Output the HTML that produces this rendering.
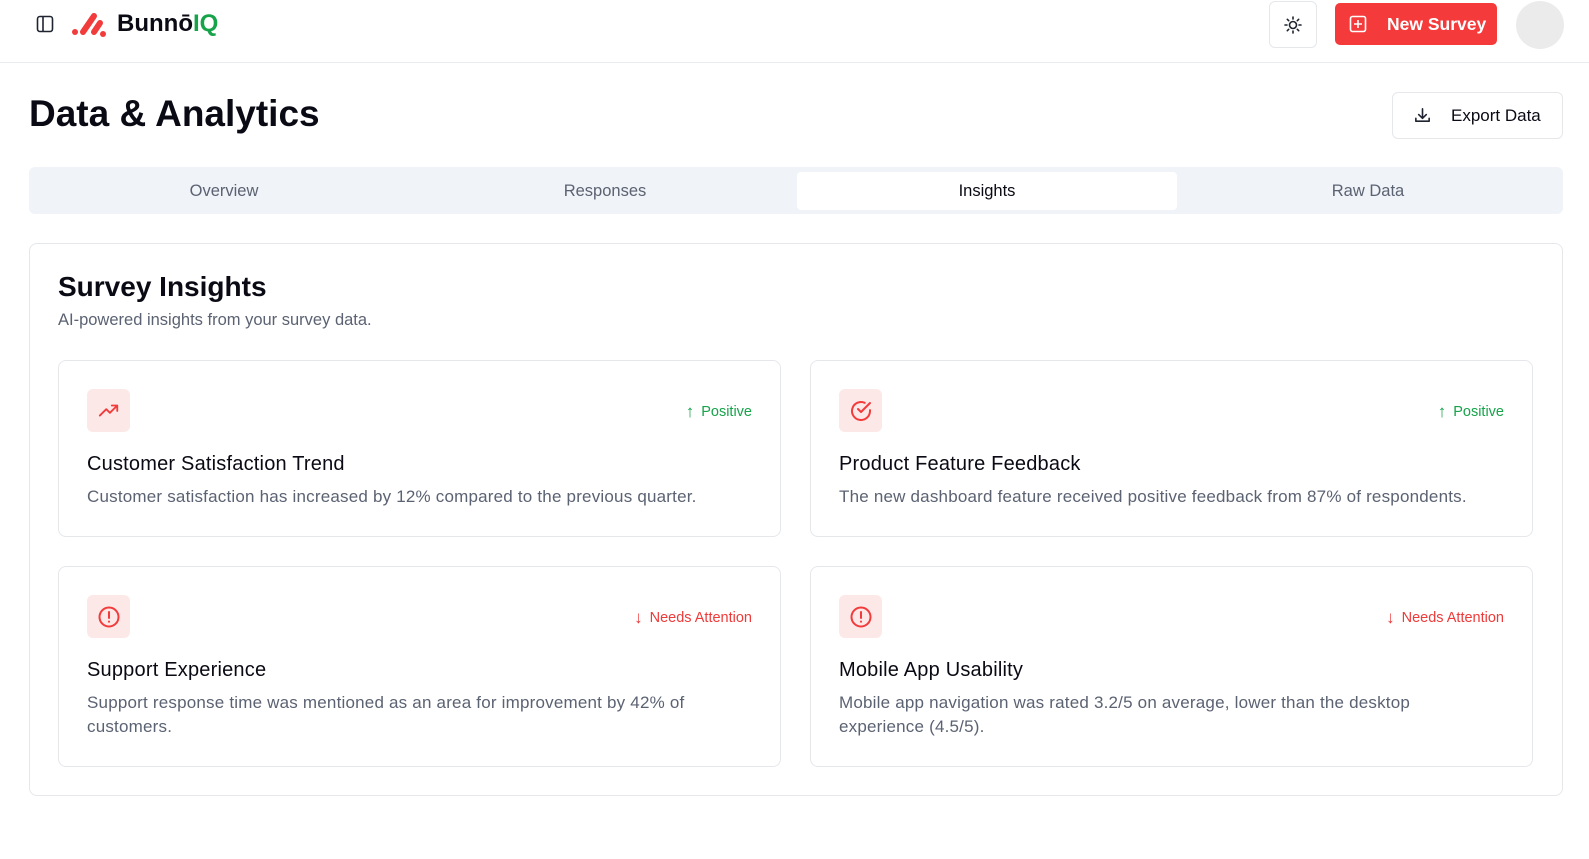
<!DOCTYPE html>
<html><head><meta charset="utf-8"><style>
*{box-sizing:border-box;margin:0;padding:0}
body{width:1589px;height:859px;background:#fff;font-family:"Liberation Sans",sans-serif;color:#0a0a14;position:relative;overflow:hidden}
.hdr{position:absolute;left:0;top:0;width:1589px;height:63px;border-bottom:1px solid #e8ebf0}
.abs{position:absolute}
.card{position:absolute;border:1px solid #e5e7eb;border-radius:8px;background:#fff}
.ic{position:absolute;left:28px;top:28px;width:43px;height:43px;border-radius:6px;background:#fde8e8;display:flex;align-items:center;justify-content:center}
.tag{position:absolute;right:28px;top:41px;font-size:14.5px;display:flex;align-items:center;gap:7px}
.ct{position:absolute;left:28px;top:92px;font-size:20px;letter-spacing:0.2px;color:#0a0a14}
.cd{position:absolute;left:28px;top:124px;font-size:17px;letter-spacing:0.2px;color:#5b6272;line-height:24px;width:640px}
.tab{position:absolute;top:172px;height:38px;width:380px;text-align:center;line-height:38px;font-size:16.5px;color:#5b6272}
</style></head><body>
<div class="hdr">
<svg class="abs" style="left:36px;top:15px" width="18" height="18" viewBox="0 0 18 18" fill="none" stroke="#1f2430" stroke-width="1.6"><rect x="1.5" y="1.5" width="15" height="15" rx="2.5"/><line x1="7" y1="1.5" x2="7" y2="16.5"/></svg>
<svg class="abs" style="left:70px;top:10px" width="40" height="30" viewBox="0 0 40 30" stroke="#f23b3b" stroke-width="6" stroke-linecap="round"><line x1="5" y1="22" x2="5" y2="22"/><line x1="13" y1="22" x2="24" y2="6"/><line x1="24" y1="22" x2="30" y2="13"/><line x1="33" y1="24" x2="33" y2="24"/></svg>
<div class="abs" style="left:117px;top:10px;font-size:24px;font-weight:bold">Bunnō<span style="color:#16a34a">IQ</span></div>
<div class="abs" style="left:1269px;top:1px;width:48px;height:47px;border:1px solid #e5e7eb;border-radius:6px"></div>
<svg class="abs" style="left:1283px;top:15px" width="20" height="20" viewBox="0 0 20 20" fill="none" stroke="#1f2430" stroke-width="1.6" stroke-linecap="round"><circle cx="10" cy="10" r="3.5"/><path d="M10 2v2M10 16v2M2 10h2M16 10h2M4.3 4.3l1.4 1.4M14.3 14.3l1.4 1.4M4.3 15.7l1.4-1.4M14.3 5.7l1.4-1.4"/></svg>
<div class="abs" style="left:1335px;top:3px;width:162px;height:42px;background:#f43a3a;border-radius:5px;color:#fff;font-size:17.5px;font-weight:bold;line-height:42px;padding-left:52px">New Survey</div>
<svg class="abs" style="left:1349px;top:15px" width="18" height="18" viewBox="0 0 18 18" fill="none" stroke="#fff" stroke-width="1.6"><rect x="1.5" y="1.5" width="15" height="15" rx="2"/><path d="M9 5v8M5 9h8"/></svg>
<div class="abs" style="left:1516px;top:1px;width:48px;height:48px;border-radius:50%;background:#ebebeb"></div>
</div>
<div class="abs" style="left:29px;top:93px;font-size:37px;font-weight:bold">Data &amp; Analytics</div>
<div class="abs" style="left:1392px;top:92px;width:171px;height:47px;border:1px solid #e5e7eb;border-radius:6px;font-size:17px;line-height:45px;padding-left:58px">Export Data</div>
<svg class="abs" style="left:1413px;top:106px" width="19" height="19" viewBox="0 0 20 20" fill="none" stroke="#1f2430" stroke-width="1.7" stroke-linecap="round" stroke-linejoin="round"><path d="M3 13v3h14v-3M10 3v10M6 9l4 4 4-4"/></svg>
<div class="abs" style="left:29px;top:167px;width:1534px;height:47px;background:#f0f3f7;border-radius:6px"></div>
<div class="tab" style="left:34px">Overview</div>
<div class="tab" style="left:415px">Responses</div>
<div class="tab" style="left:797px;background:#fff;border-radius:4px;color:#0a0a14;width:380px">Insights</div>
<div class="tab" style="left:1178px">Raw Data</div>
<div class="card" style="left:29px;top:243px;width:1534px;height:553px"></div>
<div class="abs" style="left:58px;top:271px;font-size:28px;font-weight:bold">Survey Insights</div>
<div class="abs" style="left:58px;top:311px;font-size:16.5px;color:#5b6272">AI-powered insights from your survey data.</div>

<div class="card" style="left:58px;top:360px;width:723px;height:177px">
<div class="ic"><svg width="22" height="22" viewBox="0 0 24 24" fill="none" stroke="#f23b3b" stroke-width="2" stroke-linecap="round" stroke-linejoin="round"><path d="M2 17l7-7 4 4 8-8M15 6h6v6"/></svg></div>
<div class="tag" style="color:#16a34a"><span style="font-size:17px">↑</span>Positive</div>
<div class="ct">Customer Satisfaction Trend</div>
<div class="cd">Customer satisfaction has increased by 12% compared to the previous quarter.</div></div>

<div class="card" style="left:810px;top:360px;width:723px;height:177px">
<div class="ic"><svg width="24" height="24" viewBox="0 0 24 24" fill="none" stroke="#f23b3b" stroke-width="2" stroke-linecap="round" stroke-linejoin="round"><path d="M21 11.1V12a9 9 0 1 1-5.3-8.2"/><path d="M21 4L12 13l-3-3"/></svg></div>
<div class="tag" style="color:#16a34a"><span style="font-size:17px">↑</span>Positive</div>
<div class="ct">Product Feature Feedback</div>
<div class="cd">The new dashboard feature received positive feedback from 87% of respondents.</div></div>

<div class="card" style="left:58px;top:566px;width:723px;height:201px">
<div class="ic"><svg width="24" height="24" viewBox="0 0 24 24" fill="none" stroke="#f23b3b" stroke-width="2" stroke-linecap="round"><circle cx="12" cy="12" r="9.5"/><path d="M12 7v6M12 16.5v.2"/></svg></div>
<div class="tag" style="color:#ef3a3a"><span style="font-size:17px">↓</span>Needs Attention</div>
<div class="ct">Support Experience</div>
<div class="cd">Support response time was mentioned as an area for improvement by 42% of customers.</div></div>

<div class="card" style="left:810px;top:566px;width:723px;height:201px">
<div class="ic"><svg width="24" height="24" viewBox="0 0 24 24" fill="none" stroke="#f23b3b" stroke-width="2" stroke-linecap="round"><circle cx="12" cy="12" r="9.5"/><path d="M12 7v6M12 16.5v.2"/></svg></div>
<div class="tag" style="color:#ef3a3a"><span style="font-size:17px">↓</span>Needs Attention</div>
<div class="ct">Mobile App Usability</div>
<div class="cd">Mobile app navigation was rated 3.2/5 on average, lower than the desktop experience (4.5/5).</div></div>
</body></html>
